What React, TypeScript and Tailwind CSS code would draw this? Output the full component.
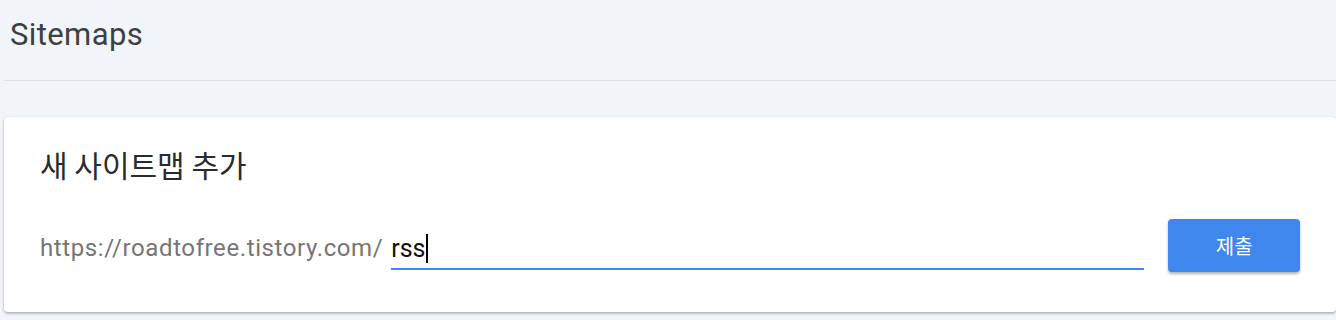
export default function App() {
  return (
    <div className="w-[1336px] h-[320px] bg-[#f1f4f9] overflow-hidden" style={{ fontFamily: 'Roboto, "Noto Sans CJK KR", sans-serif' }}>
      <div className="pl-[4px] pr-0">
        <div className="h-[81px] flex items-start border-b border-[#dfe2e6]">
          <h1 className="mt-[16px] ml-[6px] text-[31px] leading-[38px] tracking-[0.4px] text-[#3c4043] font-normal">Sitemaps</h1>
        </div>
        <div className="h-[36px]" />
        <div className="h-[195px] bg-white rounded-[4px] shadow-[0_1px_3px_rgba(60,64,67,0.3),0_2px_2px_rgba(60,64,67,0.15)] pl-[36px] pr-[35px] pt-[27px]">
          <h2 className="text-[30px] leading-[40px] text-[#2a2b2e] font-normal" style={{ fontFamily: '"Noto Sans CJK KR", sans-serif' }}>새 사이트맵 추가</h2>
          <div className="flex items-center mt-[35px]">
            <span className="text-[24px] tracking-[0.6px] text-[#757575] whitespace-nowrap leading-[30px] mt-[4px]">https://roadtofree.tistory.com/</span>
            <div className="ml-[8px] mt-[4px] w-[753px] h-[44px] border-b-2 border-[#4285f4] flex items-end pb-[4px]">
              <span className="text-[25px] leading-[30px] text-[#111]">rss</span>
              <span className="w-[2px] h-[29px] bg-black mb-[1px]" />
            </div>
            <button className="ml-[24px] w-[132px] h-[53px] bg-[#3f87ed] rounded-[4px] text-white text-[20px] shadow-[0_2px_3px_rgba(0,0,0,0.3)]" style={{ fontFamily: '"Noto Sans CJK KR", sans-serif' }}>제출</button>
          </div>
        </div>
      </div>
    </div>
  );
}
